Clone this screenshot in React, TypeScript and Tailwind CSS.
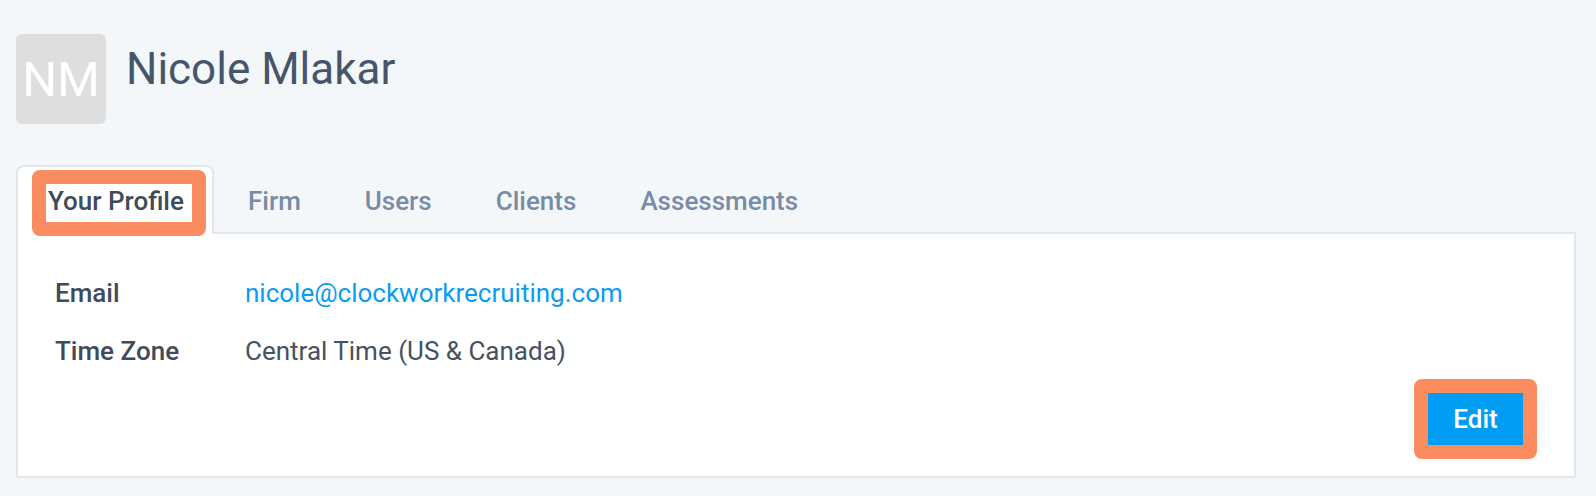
import React from 'react';

const tabs = ['Firm', 'Users', 'Clients', 'Assessments'];

export default function App() {
  return (
    <div className="min-h-screen bg-[#f4f7fa] pl-4 pr-5 pt-[34px] font-['Roboto',sans-serif]">
      {/* Header */}
      <div className="flex items-start">
        <div className="w-[90px] h-[90px] rounded-md bg-[#dedede] flex items-center justify-center text-white text-[49px] leading-none">
          NM
        </div>
        <h1 className="ml-5 mt-[10px] text-[44px] leading-[50px] font-normal text-[#45566b]">
          Nicole Mlakar
        </h1>
      </div>

      {/* Tabs */}
      <div className="mt-[41px] flex items-start border-b-2 border-[#e3e7ec] h-[69px]">
        <div className="relative h-[69px] bg-white border-2 border-b-0 border-[#e3e7ec] rounded-t-lg pl-[14px] pr-[6px] pt-[3px]">
          <div className="relative z-10 rounded-lg border-[14px] border-[#fb8c5f]">
            <div className="w-[146px] h-[38px] bg-white pl-[2px] text-[26px] leading-[35px] font-medium text-[#3d4b5c]">
              Your Profile
            </div>
          </div>
        </div>
        <div className="ml-[2px] flex">
          {tabs.map((t) => (
            <div key={t} className="px-[32px] pt-[19px] text-[26px] leading-[35px] font-medium text-[#788ca5]">
              {t}
            </div>
          ))}
        </div>
      </div>

      {/* Panel */}
      <div className="bg-white border-2 border-t-0 border-[#e3e7ec] pt-[44px] px-[37px] pb-[17px]">
        <div className="grid grid-cols-[190px_1fr] gap-y-[28px] text-[26px] leading-[30px]">
          <div className="font-medium text-[#3f4b5b]">Email</div>
          <div className="text-[#0a9cf2]">nicole@clockworkrecruiting.com</div>
          <div className="font-medium text-[#3f4b5b]">Time Zone</div>
          <div className="text-[#46525f]">Central Time (US &amp; Canada)</div>
        </div>
        <div className="mt-[13px] flex justify-end">
          <div className="rounded-lg border-[14px] border-[#fb8c5f]">
            <button className="w-[95px] h-[52px] bg-[#019df4] text-white text-[26px] font-medium flex items-center justify-center">
              Edit
            </button>
          </div>
        </div>
      </div>
    </div>
  );
}
